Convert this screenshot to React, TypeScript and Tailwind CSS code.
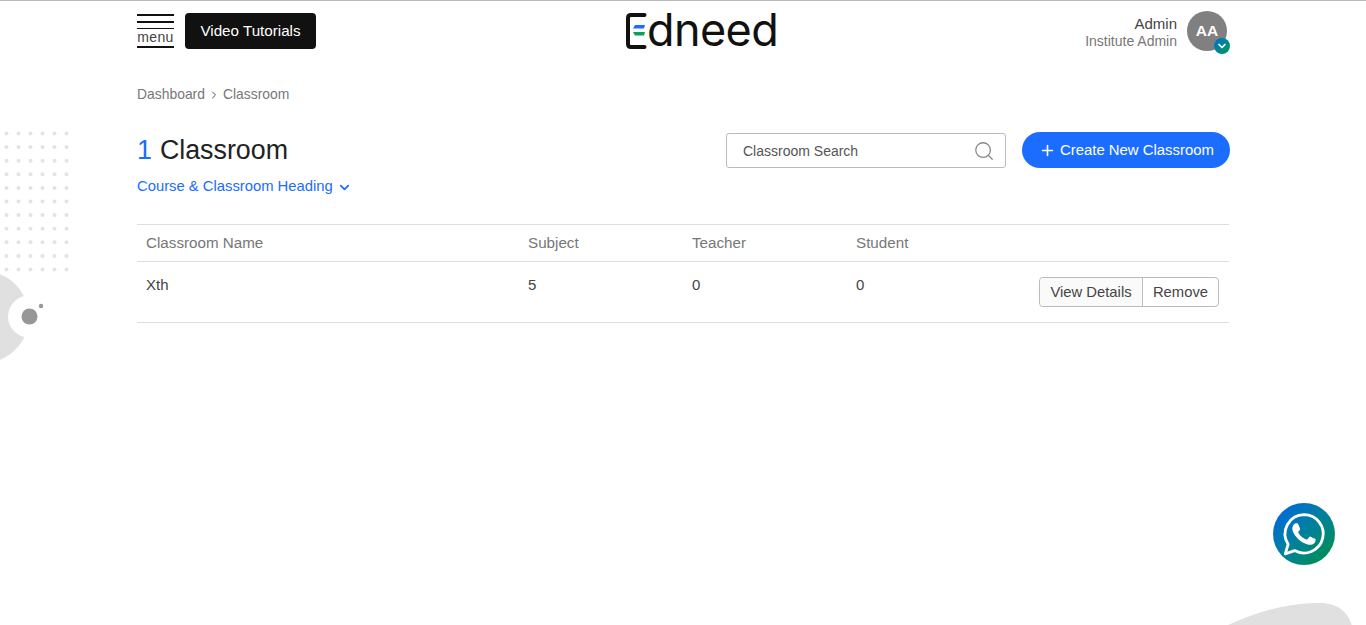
import { ChevronDown, ChevronRight, Plus, Search } from 'lucide-react';

const COLUMNS = ['Classroom Name', 'Subject', 'Teacher', 'Student'];
const GRID = 'grid grid-cols-[382px_164px_164px_1fr]';
const DOT_ROWS = Array.from({ length: 11 }, (_, i) => i);
const DOT_COLS = Array.from({ length: 6 }, (_, i) => i);

const Decorations = () => (
  <>
    {/* Dots + circles on the left edge */}
    <svg className="absolute left-0 top-[125px]" width="80" height="245" viewBox="0 0 80 245">
      {DOT_ROWS.map((r) =>
        DOT_COLS.map((c) => <circle key={`${r}-${c}`} cx={6.5 + c * 12} cy={7.5 + r * 13.6} r="2" fill="#e3e3e3" />)
      )}
      <circle cx="-17" cy="191" r="46" fill="#e0e0e0" />
      <circle cx="29" cy="190.5" r="21" fill="#ffffff" />
      <circle cx="29.5" cy="190.5" r="8" fill="#979797" />
      <circle cx="41" cy="180" r="2.2" fill="#979797" />
    </svg>
    {/* Blob bottom right */}
    <svg className="absolute left-[1220px] top-[595px]" width="146" height="30" viewBox="0 0 146 30">
      <path d="M6 30 C 36 16 66 7 100 7 C 118 7 128 16 132 30 Z" fill="#e0e0e0" />
    </svg>
  </>
);

const Logo = () => (
  <div className="flex items-center h-[36px] w-[152px]">
    <svg width="21" height="36" viewBox="0 0 21 36" className="shrink-0">
      <path d="M18.5 2 H5 Q2 2 2 5 V31 Q2 34 5 34 H18.5" fill="none" stroke="#111111" strokeWidth="4" strokeLinecap="round" />
      <path d="M9 12 H19 L18 15.5 H7 Z" fill="#1a6dff" />
      <path d="M7 19 H19 L18 22.5 H9 Z" fill="#0f9d58" />
    </svg>
    <span className="font-['Inter',sans-serif] font-normal text-[45px] leading-[36px] text-[#111111] tracking-[-0.6px] -mt-[3px]">dneed</span>
  </div>
);

const WhatsappIcon = () => (
  <svg width="48" height="48" viewBox="0 0 448 512">
    <path
      d="M224 49 A 205 205 0 1 1 124 433 L 24 468 L 55 365 A 205 205 0 0 1 224 49 Z"
      fill="none"
      stroke="#ffffff"
      strokeWidth="30"
      strokeLinejoin="round"
    />
    <path
      transform="translate(224 254) scale(1.1) translate(-224 -254)"
      fill="#ffffff"
      d="M325.1 300.5c-5.5-2.8-32.8-16.2-37.9-18-5.1-1.9-8.8-2.8-12.5 2.8-3.7 5.6-14.3 18-17.6 21.8-3.2 3.7-6.5 4.2-12 1.4-32.6-16.3-54-29.1-75.5-66-5.7-9.8 5.7-9.1 16.3-30.3 1.8-3.7.9-6.9-.5-9.7-1.4-2.8-12.5-30.1-17.1-41.2-4.5-10.8-9.1-9.3-12.5-9.5-3.2-.2-6.9-.2-10.6-.2-3.7 0-9.7 1.4-14.8 6.9-5.1 5.6-19.4 19-19.4 46.3 0 27.3 19.9 53.7 22.6 57.4 2.8 3.7 39.1 59.7 94.8 83.8 35.2 15.2 49 16.5 66.6 13.9 10.7-1.6 32.8-13.4 37.4-26.4 4.6-13 4.6-24.1 3.2-26.4-1.3-2.5-5-3.9-10.5-6.6z"
    />
  </svg>
);

export default function App() {
  return (
    <div className="relative w-[1366px] h-[625px] overflow-hidden bg-white border-t border-[#bbbbbb] font-['Liberation_Sans',Arial,sans-serif]">
      <Decorations />

      <div className="relative w-[1093px] ml-[137px]">
        {/* Header */}
        <div className="flex items-start justify-between h-[72px]">
          <div className="flex items-start gap-[11px] pt-[12px]">
            <div className="w-[37px] pt-[1px]">
              <div className="h-[2px] bg-[#111111]" />
              <div className="h-[2px] bg-[#111111] mt-[5px]" />
              <div className="h-[1px] bg-[#111111] mt-[5px]" />
              <div className="text-[14px] leading-[15px] pt-[1px] text-[#444444] text-center tracking-[0.4px]">menu</div>
              <div className="h-[2px] bg-[#111111] mt-[1px]" />
            </div>
            <button className="h-[36px] w-[131px] rounded-[4px] bg-[#111111] text-white text-[15.2px] font-normal">Video Tutorials</button>
          </div>

          <div className="pt-[12px] absolute left-[489px]">
            <Logo />
          </div>

          <div className="flex items-start pt-[10px] pr-[3px]">
            <div className="text-right mr-[10px] pt-[4px]">
              <div className="text-[15px] leading-[17px] text-[#444444]">Admin</div>
              <div className="text-[14px] leading-[18px] text-[#777777]">Institute Admin</div>
            </div>
            <div className="relative w-[40px] h-[40px] rounded-full bg-[#808080] flex items-center justify-center text-white text-[15.5px] font-bold">
              AA
              <div className="absolute left-[27px] top-[27px] w-[16px] h-[16px] rounded-full bg-gradient-to-br from-[#0a68d8] to-[#0f9640] flex items-center justify-center">
                <ChevronDown size={12} strokeWidth={3.5} color="#ffffff" />
              </div>
            </div>
          </div>
        </div>

        {/* Breadcrumb */}
        <div className="flex items-center mt-[13px] text-[13.9px] leading-[16px] text-[#777777]">
          <span>Dashboard</span>
          <ChevronRight size={12} strokeWidth={2} color="#555555" className="mx-[3px] mt-[2px]" />
          <span>Classroom</span>
        </div>

        {/* Title row */}
        <div className="flex items-start justify-between mt-[30px]">
          <div>
            <h1 className="text-[26.8px] leading-[37px] font-normal text-[#222222]">
              <span className="text-[#1a6dff] mr-[8px]">1</span>Classroom
            </h1>
            <div className="flex items-center mt-[8px] text-[14.8px] leading-[18px] text-[#1a6dff]">
              Course &amp; Classroom Heading
              <ChevronDown size={15} strokeWidth={2.75} className="ml-[4px] mt-[2px]" />
            </div>
          </div>
          <div className="flex items-start">
            <div className="flex items-center justify-between w-[280px] h-[35px] mt-[1px] pl-[16px] pr-[10px] border border-[#bbbbbb] rounded-[3px] text-[14px] text-[#555555]">
              <span className="pt-[1px]">Classroom Search</span>
              <Search size={22} strokeWidth={1.4} color="#888888" />
            </div>
            <button className="flex items-center h-[36px] w-[208px] ml-[16px] pl-[17px] rounded-full bg-[#1a6dff] text-white text-[14.9px]">
              <Plus size={17} strokeWidth={2.25} className="mr-[4px]" />
              Create New Classroom
            </button>
          </div>
        </div>

        {/* Table */}
        <div className="mt-[29px] w-[1092px] border-t border-[#dddddd]">
          <div className={`${GRID} h-[37px] items-center pl-[9px] pr-[9px] pt-[1px] border-b border-[#dddddd] text-[15.2px] text-[#777777]`}>
            {COLUMNS.map((c) => (
              <div key={c}>{c}</div>
            ))}
          </div>
          <div className={`${GRID} h-[61px] pl-[9px] pr-[10px] border-b border-[#dddddd] text-[15px] text-[#444444]`}>
            <div className="pt-[14px] leading-[18px]">Xth</div>
            <div className="pt-[14px] leading-[18px]">5</div>
            <div className="pt-[14px] leading-[18px]">0</div>
            <div className="flex items-start justify-between pt-[15px]">
              <span className="leading-[18px] -mt-[1px]">0</span>
              <div className="flex h-[30px] border border-[#bbbbbb] rounded-[4px] text-[14.8px] text-[#444444]">
                <button className="w-[103px] bg-[#fafafa] border-r border-[#bbbbbb] rounded-l-[4px]">View Details</button>
                <button className="w-[75px]">Remove</button>
              </div>
            </div>
          </div>
        </div>
      </div>

      {/* WhatsApp bubble */}
      <div className="absolute left-[1273px] top-[502px] w-[62px] h-[62px] rounded-full bg-gradient-to-br from-[#0a5fe8] to-[#109038] flex items-center justify-center">
        <WhatsappIcon />
      </div>
    </div>
  );
}
